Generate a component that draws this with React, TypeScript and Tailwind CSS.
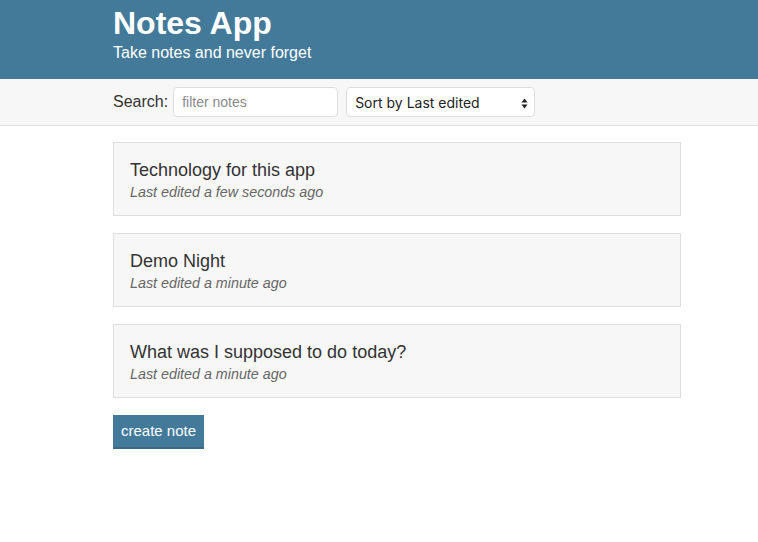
const notes = [
  { title: "Technology for this app", edited: "Last edited a few seconds ago" },
  { title: "Demo Night", edited: "Last edited a minute ago" },
  { title: "What was I supposed to do today?", edited: "Last edited a minute ago" },
];

export default function App() {
  return (
    <div className="min-h-screen bg-white text-[#333333] font-['Liberation_Sans',Arial,sans-serif]">
      {/* Header */}
      <header className="bg-[#437a9a] h-[79px] text-white">
        <div className="ml-[113px] w-[568px] pt-[4px]">
          <h1 className="text-[32px] font-bold leading-[38px]">Notes App</h1>
          <p className="text-[16px] leading-[20px] mt-[1px]">Take notes and never forget</p>
        </div>
      </header>

      {/* Filters */}
      <div className="bg-[#f7f7f7] border-b border-[#dedede] h-[47px]">
        <div className="ml-[113px] w-[568px] h-full flex items-center gap-[8px]">
          <div className="flex items-center gap-[5px]">
            <label className="text-[16px] text-[#333333]">Search:</label>
            <input
              className="w-[165px] h-[30px] rounded-[4px] border border-[#dedede] bg-white px-[8px] text-[14px] text-[#333333] placeholder:text-[#8a8a8a] outline-none"
              placeholder="filter notes"
            />
          </div>
          <div className="relative w-[189px] h-[30px] rounded-[4px] border border-[#dedede] bg-white flex items-center px-[8px] text-[14px] text-[#222222] font-['Inter',sans-serif]">
            <span>Sort by Last edited</span>
            <svg className="absolute right-[6px] top-[10px]" width="7" height="11" viewBox="0 0 7 11">
              <path d="M0.5 4.5 L3.5 0.5 L6.5 4.5 Z" fill="#222" />
              <path d="M0.5 6.5 L3.5 10.5 L6.5 6.5 Z" fill="#222" />
            </svg>
          </div>
        </div>
      </div>

      {/* Notes */}
      <main className="ml-[113px] w-[568px] pt-[16px] flex flex-col gap-[17px]">
        {notes.map((note) => (
          <div
            key={note.title}
            className="bg-[#f7f7f7] border border-[#dedede] h-[74px] px-[16px] pt-[16px]"
          >
            <h2 className="text-[18px] leading-[22px] text-[#333333]">{note.title}</h2>
            <p className="text-[14.3px] leading-[18px] italic text-[#666666] mt-[2px]">{note.edited}</p>
          </div>
        ))}
        <div>
          <button className="bg-[#437a9a] text-white text-[15px] h-[34px] px-[8px] pt-[1px] border-b-[2px] border-[#3a6985]">
            create note
          </button>
        </div>
      </main>
    </div>
  );
}
